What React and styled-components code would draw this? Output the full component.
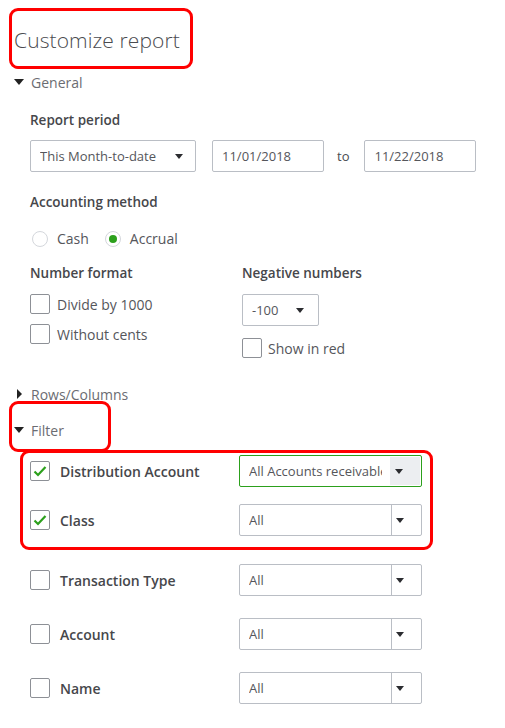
import React from 'react';
import styled, { createGlobalStyle, css } from 'styled-components';

const GlobalStyle = createGlobalStyle`
  body {
    margin: 0;
    background: #fff;
    font-family: "Open Sans", "Liberation Sans", sans-serif;
    color: #393a3d;
  }
`;

const Page = styled.div`
  width: 505px;
  height: 728px;
  overflow: hidden;
  padding: 25px 0 0 14px;
  box-sizing: border-box;
`;

// red annotation frame drawn over the content
const Marked = styled.div`
  position: relative;
  margin-top: ${p => p.$mt || 0}px;
  &::after {
    content: '';
    position: absolute;
    top: ${p => p.$t}px;
    left: ${p => p.$l}px;
    width: ${p => p.$w}px;
    height: ${p => p.$h}px;
    border: 3px solid #f00;
    border-radius: 9px;
    box-sizing: border-box;
    pointer-events: none;
  }
`;

const Title = styled.h1`
  margin: 0;
  font-size: 21px;
  font-weight: 300;
  line-height: 30px;
  color: #4a4b4f;
  letter-spacing: 0.1px;
`;

const Toggle = styled.div`
  display: flex;
  align-items: center;
  height: 20px;
  font-size: 14px;
  color: #6b6c72;
  margin-top: ${p => p.$mt || 0}px;
`;

const Caret = styled.span`
  width: 17px;
  display: flex;
  align-items: center;
  ${p => p.$open ? css`
    &::before {
      content: '';
      border-left: 5px solid transparent;
      border-right: 5px solid transparent;
      border-top: 6px solid #222;
    }
  ` : css`
    &::before {
      content: '';
      margin-left: 3px;
      border-top: 5px solid transparent;
      border-bottom: 5px solid transparent;
      border-left: 5px solid #222;
    }
  `}
`;

const Body = styled.div`
  padding-left: 16px;
`;

const Label = styled.div`
  font-size: 13.5px;
  font-weight: 600;
  color: #46474b;
  height: 20px;
  line-height: 20px;
  margin-top: ${p => p.$mt || 0}px;
`;

const Row = styled.div`
  display: flex;
  align-items: center;
  margin-top: ${p => p.$mt || 0}px;
`;

const Box = styled.div`
  height: 32px;
  box-sizing: border-box;
  border: 1px solid ${p => p.$active ? '#2ca01c' : '#babec5'};
  border-radius: 2px;
  display: flex;
  align-items: center;
  font-size: 13px;
  color: #55565b;
  width: ${p => p.$w}px;
  padding-left: 9px;
  margin-left: ${p => p.$ml || 0}px;
  background: #fff;
`;

const BoxText = styled.span`
  flex: 1;
  white-space: nowrap;
  overflow: hidden;
  margin-right: ${p => p.$mr || 0}px;
`;

const Arrow = styled.span`
  width: 0;
  height: 0;
  border-left: 4.5px solid transparent;
  border-right: 4.5px solid transparent;
  border-top: 5px solid #2b2c30;
  margin-right: ${p => p.$mr || 14}px;
`;

const ArrowCell = styled.span`
  align-self: stretch;
  width: 29px;
  border-left: 1px solid ${p => p.$active ? 'transparent' : '#babec5'};
  background: ${p => p.$active ? '#eceef1' : 'transparent'};
  display: flex;
  align-items: center;
  justify-content: center;
  margin: ${p => p.$active ? '1px 1px 1px 0' : '0'};
`;

const To = styled.span`
  font-size: 13px;
  color: #4a4b4f;
  margin: 0 15px 0 13px;
`;

const Radio = styled.span`
  width: 16px;
  height: 16px;
  border-radius: 50%;
  border: 1px solid #d4d7dc;
  box-sizing: border-box;
  display: flex;
  align-items: center;
  justify-content: center;
  margin-left: ${p => p.$ml || 0}px;
  &::after {
    content: '';
    display: ${p => p.$on ? 'block' : 'none'};
    width: 8px;
    height: 8px;
    border-radius: 50%;
    background: #2ca01c;
  }
`;

const OptText = styled.span`
  font-size: 14px;
  color: #55565b;
  margin-left: ${p => p.$ml || 8}px;
`;

const Columns = styled.div`
  display: grid;
  grid-template-columns: 212px 1fr;
  margin-top: 15px;
`;

const Check = styled.span`
  width: 20px;
  height: 20px;
  flex: none;
  border: 1px solid #8d9096;
  border-radius: 2px;
  box-sizing: border-box;
  display: flex;
  align-items: center;
  justify-content: center;
`;

const FilterRow = styled.div`
  display: grid;
  grid-template-columns: 30px 179px 183px;
  align-items: center;
  margin-top: ${p => p.$mt || 0}px;
`;

const FilterLabel = styled.span`
  font-size: 14px;
  font-weight: 600;
  color: #46474b;
  white-space: nowrap;
`;

const Tick = () => (
  <svg width="14" height="12" viewBox="0 0 14 12">
    <path d="M1.5 6.5 L5 10 L12.5 2" fill="none" stroke="#2ca01c" strokeWidth="2.2" />
  </svg>
);

const FilterSelect = ({ value, active }) => (
  <Box $w={183} $active={active}>
    <BoxText $mr={8}>{value}</BoxText>
    <ArrowCell $active={active}><Arrow $mr={0} /></ArrowCell>
  </Box>
);

const Filter = ({ label, value, checked, active, mt }) => (
  <FilterRow $mt={mt}>
    <Check>{checked && <Tick />}</Check>
    <FilterLabel>{label}</FilterLabel>
    <FilterSelect value={value} active={active} />
  </FilterRow>
);

export default function App() {
  return (
    <Page>
      <GlobalStyle />
      <Marked $t={-17} $l={-5} $w={184} $h={61}>
        <Title>Customize report</Title>
      </Marked>

      <Toggle $mt={17}><Caret $open />General</Toggle>
      <Body>
        <Label $mt={18}>Report period</Label>
        <Row $mt={10}>
          <Box $w={166}>
            <BoxText>This Month-to-date</BoxText>
            <Arrow $mr={12} />
          </Box>
          <Box $w={112} $ml={16}><BoxText>11/01/2018</BoxText></Box>
          <To>to</To>
          <Box $w={112}><BoxText>11/22/2018</BoxText></Box>
        </Row>

        <Label $mt={20}>Accounting method</Label>
        <Row $mt={17}>
          <Radio $ml={2} />
          <OptText $ml={9}>Cash</OptText>
          <Radio $on $ml={16} />
          <OptText $ml={9}>Accrual</OptText>
        </Row>

        <Columns>
          <div>
            <Label>Number format</Label>
            <Row $mt={11}>
              <Check />
              <OptText $ml={7}>Divide by 1000</OptText>
            </Row>
            <Row $mt={10}>
              <Check />
              <OptText $ml={7}>Without cents</OptText>
            </Row>
          </div>
          <div>
            <Label>Negative numbers</Label>
            <Row $mt={11}>
              <Box $w={77}>
                <BoxText>-100</BoxText>
                <Arrow $mr={14} />
              </Box>
            </Row>
            <Row $mt={12}>
              <Check />
              <OptText $ml={6}>Show in red</OptText>
            </Row>
          </div>
        </Columns>
      </Body>

      <Toggle $mt={26}><Caret />Rows/Columns</Toggle>
      <Marked $mt={16} $t={-19} $l={-5} $w={102} $h={51}>
        <Toggle><Caret $open />Filter</Toggle>
      </Marked>

      <Marked $mt={15} $t={-5} $l={6} $w={413} $h={100}>
        <Body>
          <Filter label="Distribution Account" value="All Accounts receivable" checked active />
          <Filter mt={17} label="Class" value="All" checked />
        </Body>
      </Marked>
      <Body>
        <Filter mt={28} label="Transaction Type" value="All" />
        <Filter mt={22} label="Account" value="All" />
        <Filter mt={22} label="Name" value="All" />
      </Body>
    </Page>
  );
}
